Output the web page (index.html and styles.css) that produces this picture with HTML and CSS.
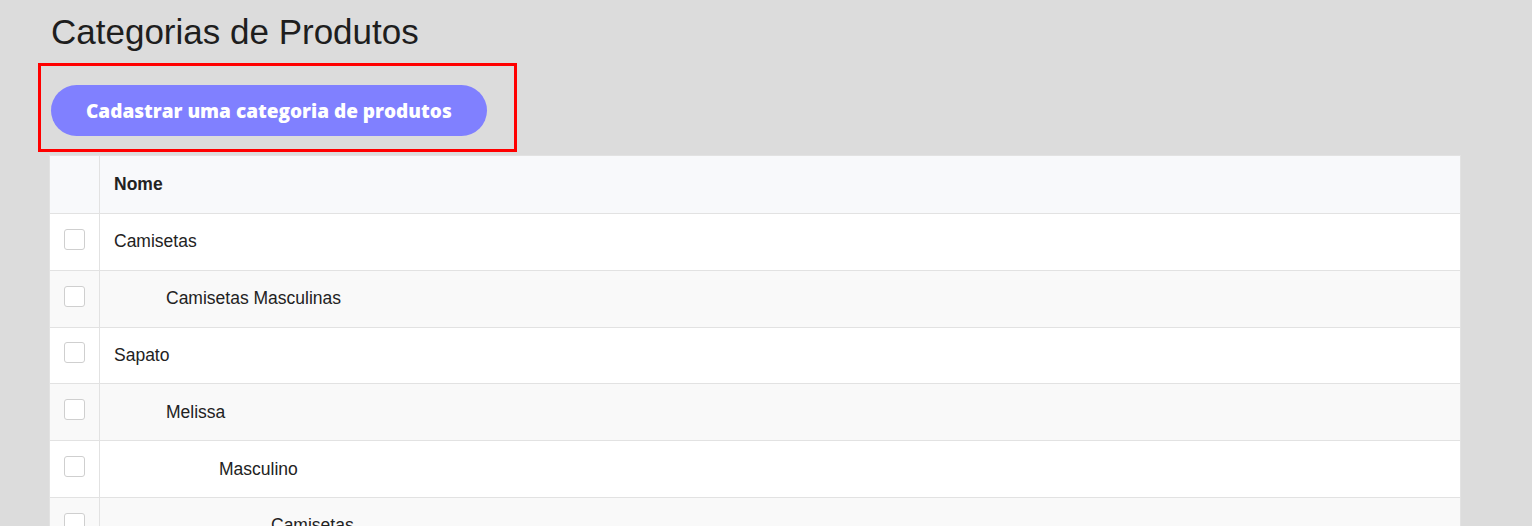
FILE: index.html
```html
<!DOCTYPE html>
<html lang="pt-BR">
<head>
    <meta charset="UTF-8">
    <meta name="viewport" content="width=device-width, initial-scale=1.0">
    <title>Categorias de Produtos</title>
    <link rel="stylesheet" href="styles.css">
</head>
<body>
    <div class="page">
        <h1>Categorias de Produtos</h1>

        <div class="highlight">
            <button type="button" class="btn-primary">Cadastrar uma categoria de produtos</button>
        </div>

        <table class="categories">
            <thead>
                <tr>
                    <th class="check-col"></th>
                    <th>Nome</th>
                </tr>
            </thead>
            <tbody>
                <tr>
                    <td class="check-col"><span class="checkbox"></span></td>
                    <td class="level-0">Camisetas</td>
                </tr>
                <tr>
                    <td class="check-col"><span class="checkbox"></span></td>
                    <td class="level-1">Camisetas Masculinas</td>
                </tr>
                <tr>
                    <td class="check-col"><span class="checkbox"></span></td>
                    <td class="level-0">Sapato</td>
                </tr>
                <tr>
                    <td class="check-col"><span class="checkbox"></span></td>
                    <td class="level-1">Melissa</td>
                </tr>
                <tr>
                    <td class="check-col"><span class="checkbox"></span></td>
                    <td class="level-2">Masculino</td>
                </tr>
                <tr>
                    <td class="check-col"><span class="checkbox"></span></td>
                    <td class="level-3">Camisetas</td>
                </tr>
            </tbody>
        </table>
    </div>
</body>
</html>
```

FILE: styles.css
```css
body {
    font-family: "Liberation Sans", Arial, sans-serif;
    background-color: #dcdcdc;
    color: #222;
    margin: 0;
}
.page {
    padding: 0 71px 0 49px;
}
h1 {
    font-size: 35px;
    font-weight: normal;
    color: #1e1e1e;
    margin: 12px 0 0 2px;
    line-height: 40px;
}
.highlight {
    display: inline-block;
    margin: 11px 0 0 -11px;
    padding: 19px 27px 13px 10px;
    border: 3px solid #ff0000;
}
.btn-primary {
    display: block;
    height: 51px;
    padding: 0 35px;
    border: none;
    border-radius: 26px;
    background-color: #8080ff;
    color: #fff;
    font-family: "Open Sans", Lato, sans-serif;
    font-weight: 800;
    font-size: 19px;
    cursor: pointer;
}
.categories {
    width: 100%;
    margin-top: 3px;
    border-collapse: collapse;
    background-color: #fff;
    border: 1px solid #e2e2e2;
    font-size: 17.5px;
}
.categories th,
.categories td {
    height: 55.8px;
    padding: 0 14px;
    text-align: left;
    border-bottom: 1px solid #e2e2e2;
    color: #222;
}
.categories th {
    background-color: #f8f9fb;
    font-weight: bold;
    height: 57px;
}
.categories tbody tr:nth-child(even) td {
    background-color: #f9f9f9;
}
.categories .check-col {
    width: 21px;
    padding: 0 14px;
    border-right: 1px solid #e2e2e2;
}
.checkbox {
    display: block;
    width: 19px;
    height: 19px;
    border: 1px solid #cfcfcf;
    border-radius: 3px;
    background-color: #fff;
    margin-top: -5px;
}
.level-1 { padding-left: 66px !important; }
.level-2 { padding-left: 119px !important; }
.level-3 { padding-left: 171px !important; }
```
